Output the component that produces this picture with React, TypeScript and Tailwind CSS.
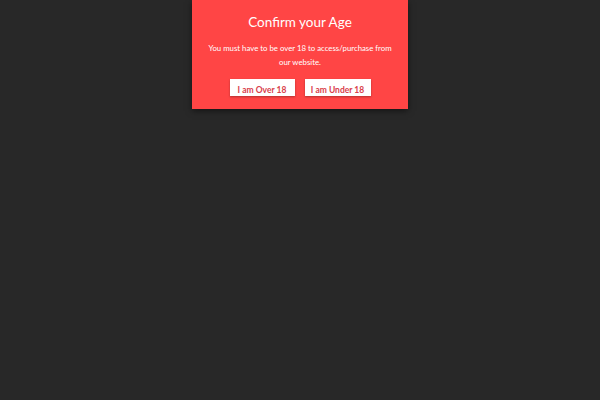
import React from 'react';

const App: React.FC = () => {
  return (
    <div className="min-h-[400px] w-full bg-[#282828] flex justify-center" style={{ fontFamily: 'Lato, "Open Sans", sans-serif' }}>
      <div className="w-[216px] h-[109px] bg-[#ff4545] text-white text-center shadow-[0_2px_6px_rgba(0,0,0,0.5)] pt-[13px]">
        <h2 className="text-[13.5px] leading-[18px]">Confirm your Age</h2>
        <p className="mt-[10px] px-[12px] text-[7.8px] leading-[14px]">
          You must have to be over 18 to access/purchase from our website.
        </p>
        <div className="mt-[10px] flex justify-center gap-[10px]">
          <button className="w-[65px] h-[17px] bg-white text-[#d9404a] text-[8.5px] font-bold leading-[17px] pt-[3px] shadow-[0_1px_2px_rgba(0,0,0,0.3)]">
            I am Over 18
          </button>
          <button className="w-[66px] h-[17px] bg-white text-[#d9404a] text-[8.5px] font-bold leading-[17px] pt-[3px] shadow-[0_1px_2px_rgba(0,0,0,0.3)]">
            I am Under 18
          </button>
        </div>
      </div>
    </div>
  );
};

export default App;
